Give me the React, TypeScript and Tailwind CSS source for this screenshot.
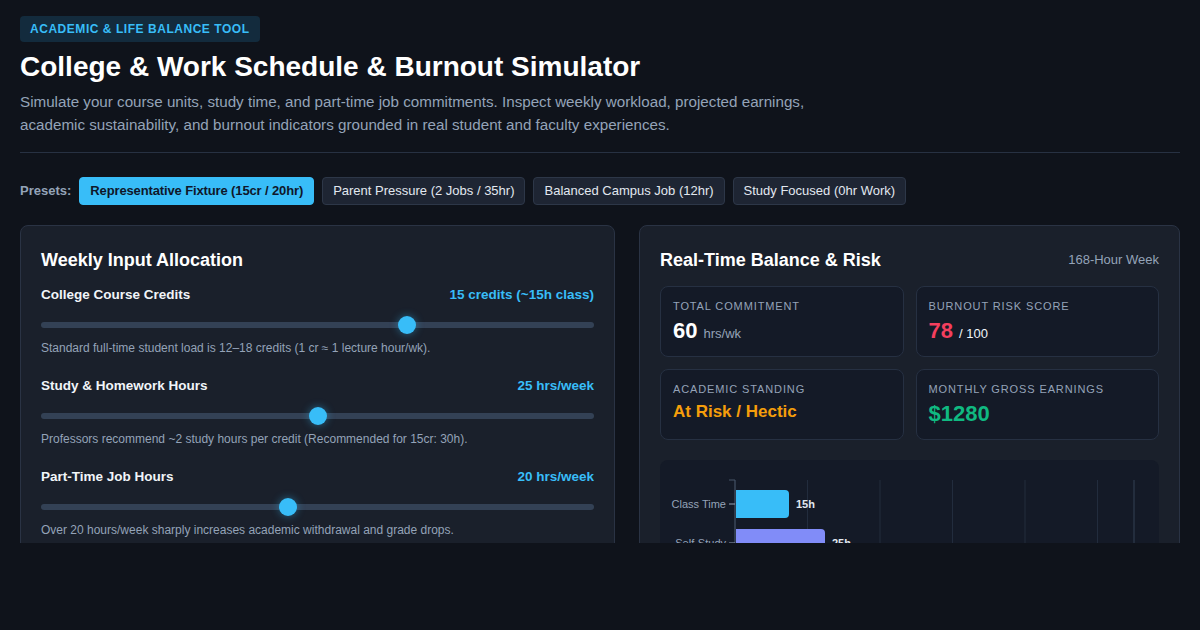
import React from 'react'

const font = { fontFamily: '"Liberation Sans", Arial, sans-serif' }

const presets = [
  'Representative Fixture (15cr / 20hr)',
  'Parent Pressure (2 Jobs / 35hr)',
  'Balanced Campus Job (12hr)',
  'Study Focused (0hr Work)',
]

const sliders = [
  {
    label: 'College Course Credits',
    value: '15 credits (~15h class)',
    pct: 0.667,
    help: 'Standard full-time student load is 12–18 credits (1 cr ≈ 1 lecture hour/wk).',
  },
  {
    label: 'Study & Homework Hours',
    value: '25 hrs/week',
    pct: 0.5,
    help: 'Professors recommend ~2 study hours per credit (Recommended for 15cr: 30h).',
  },
  {
    label: 'Part-Time Job Hours',
    value: '20 hrs/week',
    pct: 0.445,
    help: 'Over 20 hours/week sharply increases academic withdrawal and grade drops.',
  },
]

function Slider({ pct }: { pct: number }) {
  return (
    <div className="relative mt-3 flex h-[18px] items-center">
      <div className="h-[6px] w-full rounded-full bg-[#334155]" />
      <div
        className="absolute top-0 h-[18px] w-[18px] rounded-full bg-[#38bdf8] shadow-[0_0_8px_rgba(56,189,248,0.45)]"
        style={{ left: `calc(${pct} * (100% - 18px))` }}
      />
    </div>
  )
}

function Metric({ label, children }: { label: string; children: React.ReactNode }) {
  return (
    <div className="h-[71px] rounded-lg border border-[#263042] bg-[#141a27] px-3 pt-[11px]">
      <p className="text-[11px] uppercase leading-4 tracking-[0.08em] text-[#94a3b8]">{label}</p>
      <div className="mt-[3px] flex items-baseline gap-1.5">{children}</div>
    </div>
  )
}

function Chart() {
  const scale = 3.625
  const x0 = 75
  const grid = [0, 20, 40, 60, 80, 100]
  const bars = [
    { name: 'Class Time', value: 15, color: '#38bdf8', y: 30 },
    { name: 'Self-Study', value: 25, color: '#818cf8', y: 69 },
  ]
  return (
    <svg width="499" height="140" className="block">
      {grid.map((g) => (
        <line
          key={g}
          x1={x0 + g * scale}
          x2={x0 + g * scale}
          y1={20}
          y2={140}
          stroke="#222c3d"
          strokeWidth="1"
        />
      ))}
      <line x1={474} x2={474} y1={20} y2={140} stroke="#334155" />
      <line x1={x0} x2={x0} y1={20} y2={140} stroke="#475569" />
      <line x1={x0 - 6} x2={x0} y1={20} y2={20} stroke="#475569" />
      {bars.map((b) => (
        <g key={b.name}>
          <line x1={x0 - 6} x2={x0} y1={b.y + 14} y2={b.y + 14} stroke="#94a3b8" />
          <text
            x={x0 - 9}
            y={b.y + 18}
            textAnchor="end"
            fontSize="11"
            fill="#94a3b8"
            style={font}
          >
            {b.name}
          </text>
          <path
            d={`M${x0 + 1} ${b.y} h${b.value * 3.6 - 5} a4 4 0 0 1 4 4 v20 a4 4 0 0 1 -4 4 h-${b.value * 3.6 - 5} z`}
            fill={b.color}
          />
          <text
            x={x0 + b.value * 3.6 + 7}
            y={b.y + 18}
            fontSize="11"
            fontWeight="bold"
            fill="#e2e8f0"
            style={font}
          >
            {b.value}h
          </text>
        </g>
      ))}
    </svg>
  )
}

export default function App() {
  return (
    <div className="h-[630px] bg-[#0f131b]" style={font}>
      <div className="h-[543px] overflow-hidden px-5 pt-4">
        <span className="inline-block rounded bg-[#132b3d] px-2.5 py-[5px] text-xs font-bold uppercase leading-4 tracking-[0.045em] text-[#38bdf8]">
          Academic &amp; Life Balance Tool
        </span>
        <h1 className="mt-2 text-[28px] font-bold leading-[34px] text-white">
          College &amp; Work Schedule &amp; Burnout Simulator
        </h1>
        <p className="mt-1.5 max-w-[830px] text-[15.2px] leading-[23px] text-[#94a3b8]">
          Simulate your course units, study time, and part-time job commitments. Inspect weekly
          workload, projected earnings, academic sustainability, and burnout indicators grounded in
          real student and faculty experiences.
        </p>
        <div className="mt-4 border-t border-[#273142]" />

        <div className="mt-6 flex items-center gap-2">
          <span className="text-[13px] font-bold text-[#94a3b8]">Presets:</span>
          {presets.map((p, i) => (
            <button
              key={p}
              type="button"
              className={
                i === 0
                  ? 'h-7 rounded border border-[#38bdf8] bg-[#38bdf8] px-2.5 text-[13px] font-bold tracking-[-0.01em] text-[#0f172a]'
                  : 'h-7 rounded border border-[#2d3748] bg-[#1e2533] px-2.5 text-[13px] text-[#e2e8f0]'
              }
            >
              {p}
            </button>
          ))}
        </div>

        <div className="mt-5 grid grid-cols-[1.1fr_1fr] gap-6">
          <div className="h-[400px] rounded-lg border border-[#2a3344] bg-[#1a202b] p-5">
            <h2 className="text-lg font-bold leading-7 text-white">Weekly Input Allocation</h2>
            <div className="mt-3 space-y-[21px]">
              {sliders.map((s) => (
                <div key={s.label}>
                  <div className="flex items-center justify-between text-[13.5px] font-bold leading-[18px]">
                    <span className="text-[#f1f5f9]">{s.label}</span>
                    <span className="text-[#38bdf8]">{s.value}</span>
                  </div>
                  <Slider pct={s.pct} />
                  <p className="mt-1.5 text-xs leading-4 text-[#94a3b8]">{s.help}</p>
                </div>
              ))}
            </div>
          </div>

          <div className="h-[400px] rounded-lg border border-[#2a3344] bg-[#1a202b] p-5">
            <div className="flex items-center justify-between">
              <h2 className="text-lg font-bold leading-7 text-white">Real-Time Balance &amp; Risk</h2>
              <span className="text-[13px] leading-5 text-[#94a3b8]">168-Hour Week</span>
            </div>
            <div className="mt-3 grid grid-cols-2 gap-3">
              <Metric label="Total Commitment">
                <span className="text-[22px] font-bold leading-7 text-white">60</span>
                <span className="text-[13px] text-[#94a3b8]">hrs/wk</span>
              </Metric>
              <Metric label="Burnout Risk Score">
                <span className="text-[22px] font-bold leading-7 text-[#f43f5e]">78</span>
                <span className="text-[13px] text-[#f1f5f9]">/ 100</span>
              </Metric>
              <Metric label="Academic Standing">
                <span className="text-[17px] font-bold leading-6 text-[#f59e0b]">At Risk / Hectic</span>
              </Metric>
              <Metric label="Monthly Gross Earnings">
                <span className="text-[22px] font-bold leading-7 text-[#10b981]">$1280</span>
              </Metric>
            </div>
            <div className="mt-5 h-[200px] rounded-lg bg-[#141a27]">
              <Chart />
            </div>
          </div>
        </div>
      </div>
    </div>
  )
}
